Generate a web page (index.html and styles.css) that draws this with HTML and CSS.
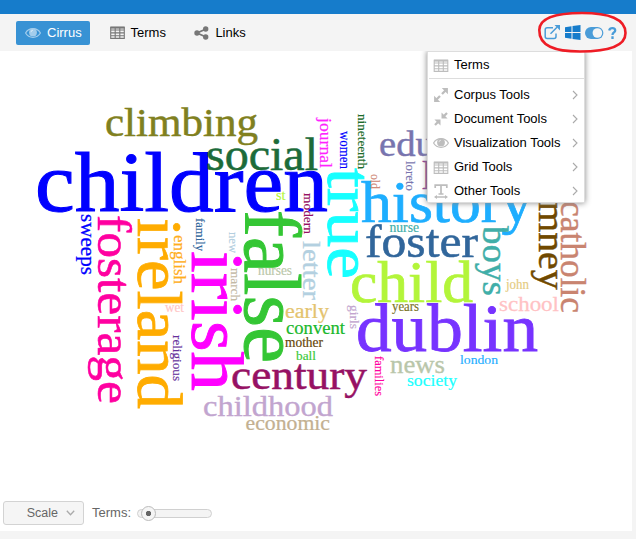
FILE: index.html
```html
<!DOCTYPE html>
<html lang="en">
<head>
<meta charset="utf-8">
<title>Cirrus</title>
<link rel="stylesheet" href="styles.css">
</head>
<body>
<svg class="defs" width="0" height="0">
  <symbol id="eye" viewBox="0 0 16 12"><path d="M.6 6C3.8.2 12.2.2 15.4 6 12.2 11.8 3.800 11.8.6 6Z" fill="none" stroke="currentColor" stroke-width="1.2"/><circle cx="8" cy="5.4" r="3.9" fill="currentColor"/><path d="M6 5.200A2 2 0 0 1 8 3.200" fill="none" stroke="#fff" stroke-width=".8" opacity=".7"/></symbol>
  <symbol id="table" viewBox="0 0 15 13"><path d="M.7 1.200h13.600v11.200H.7zM.7 4h13.600M.7 6.900h13.600M.7 9.700h13.600M5.200 2v10.400M9.800 2v10.400" fill="none" stroke="currentColor" stroke-width="1.100"/><path d="M.5.600h14v2H.5z" fill="currentColor"/></symbol>
  <symbol id="chev" viewBox="0 0 6 10"><path d="M1 1l4 4-4 4" fill="none" stroke="currentColor" stroke-width="1.100"/></symbol>
</svg>
<div class="band"></div>
<header class="bar">
  <nav class="tabs">
    <a class="tab active"><svg width="16" height="12"><use href="#eye"/></svg>Cirrus</a>
    <a class="tab terms"><svg width="15" height="13"><use href="#table"/></svg>Terms</a>
    <a class="tab links"><svg width="15" height="14" viewBox="0 0 15 14"><path d="M12 3L3 7l9 4" fill="none" stroke="currentColor" stroke-width="1.800"/><circle cx="11.700" cy="3" r="2.700" fill="currentColor"/><circle cx="3" cy="7" r="2.700" fill="currentColor"/><circle cx="11.700" cy="11" r="2.700" fill="currentColor"/></svg>Links</a>
  </nav>
  <div class="tools">
    <svg width="17" height="15" viewBox="0 0 17 15"><path d="M9 2.700H3.200Q1.200 2.700 1.200 4.700V11.500Q1.200 13.500 3.200 13.500H10Q12 13.500 12 11.500V8.500M6.500 8.700L13 2.200" fill="none" stroke="currentColor" stroke-width="1.500"/><path d="M10.500 0H16v5.500z" fill="currentColor"/></svg>
    <svg class="win" width="16" height="15" viewBox="0 0 16 15"><path d="M0 2.300L6.500 1.300V7H0zM7.500 1.100L15.500 0V7h-8zM0 8h6.500v5.700L0 12.700zM7.500 8h8v7L7.500 13.900z" fill="currentColor"/></svg>
    <svg width="19" height="12" viewBox="0 0 19 12"><rect x="0" y="0" width="18.400" height="12" rx="6" fill="currentColor"/><circle cx="12.400" cy="6" r="4.800" fill="#f4f4f4"/></svg>
    <svg width="9" height="12" viewBox="0 0 9 12"><path d="M1.200 3.500C2 .3 7.200.6 7.200 3.500 7.200 5.500 4.500 5.400 4.500 7.900M4.500 9.300V12" fill="none" stroke="currentColor" stroke-width="2.300"/></svg>
  </div>
</header>
<main class="panel">
  <svg class="cloud" id="cloud" width="632" height="440" viewBox="0 51 632 440"></svg>
  <footer class="controls">
    <button class="scale">Scale<svg width="9" height="6" viewBox="0 0 9 6"><path d="M.8.8l3.700 4 3.700-4" fill="none" stroke="#aaa" stroke-width="1.300"/></svg></button>
    <span class="label">Terms:</span>
    <div class="track"><div class="thumb"></div></div>
  </footer>
</main>
<div class="menu">
  <div class="item first"><svg width="15" height="13"><use href="#table"/></svg><span>Terms</span></div>
  <div class="item"><svg width="14" height="14" viewBox="0 0 14 14"><path d="M8 6l4-4M6 8l-4 4" stroke="currentColor" stroke-width="2.300"/><path d="M7.800.1h6.100v6.100zM.1 7.800v6.100h6.100z" fill="currentColor"/></svg><span>Corpus Tools</span><svg class="chev" width="6" height="10"><use href="#chev"/></svg></div>
  <div class="item"><svg width="14" height="14" viewBox="0 0 14 14"><path d="M9 5l4-4M5 9l-4 4" stroke="currentColor" stroke-width="2.300"/><path d="M7.500.4v6.100h6.100zM.4 7.500h6.100v6.100z" fill="currentColor"/></svg><span>Document Tools</span><svg class="chev" width="6" height="10"><use href="#chev"/></svg></div>
  <div class="item"><svg width="16" height="12"><use href="#eye"/></svg><span>Visualization Tools</span><svg class="chev" width="6" height="10"><use href="#chev"/></svg></div>
  <div class="item"><svg width="15" height="13"><use href="#table"/></svg><span>Grid Tools</span><svg class="chev" width="6" height="10"><use href="#chev"/></svg></div>
  <div class="item"><svg width="14" height="15" viewBox="0 0 14 15"><path d="M1.200 4V1.200h11.600V4M7 1v9M4.500 10h5M1.500 13h11" fill="none" stroke="currentColor" stroke-width="1.700"/><path d="M0 13l3-2v4zM14 13l-3-2v4z" fill="currentColor"/></svg><span>Other Tools</span><svg class="chev" width="6" height="10"><use href="#chev"/></svg></div>
</div>
<svg class="ring" width="92" height="44" viewBox="0 0 92 44"><path d="M45 2C20 2 2.500 6 2.300 19 2 35 18 40.500 43 40.500 70 40.500 88.500 36 88.500 22 88.500 8 72 2 45 2Z" fill="none" stroke="#ee1c25" stroke-width="2.600"/></svg>
<script src="cloud.js"></script>
</body>
</html>
```
FILE: styles.css
```css
* { box-sizing: border-box; }
body { margin: 0; width: 636px; height: 539px; overflow: hidden; position: relative; background: #f4f4f4; font: 13px/16px "Liberation Sans", Arial, sans-serif; color: #000; }
.defs { position: absolute; }
.band { height: 14px; background: #167ccb; }
.bar { height: 37px; display: flex; justify-content: space-between; align-items: center; padding: 0 19px 0 16px; }
.tabs { display: flex; gap: 10.5px; }
.tab { display: flex; align-items: center; height: 24px; gap: 6px; padding: 0 9px; color: #000; border-radius: 2px; }
.tab svg { color: #777; }
.active { background: #3892d4; color: #fff; width: 74px; }
.active svg { color: #a3cdec; flex: none; }
.tools { display: flex; align-items: center; gap: 4px; color: #4a9cd8; }
.win { color: #167ccb; }
.panel { width: 632px; height: 480px; background: #fff; display: flex; flex-direction: column; }
.cloud { display: block; flex: none; font-family: "Palatino Linotype", Palatino, "Liberation Serif", serif; }
.controls { display: flex; align-items: center; padding: 5px 3px 0; height: 39px; color: #666; }
.scale { width: 81px; height: 24px; display: flex; align-items: center; justify-content: flex-end; gap: 8px; padding: 0 8px; border: 1px solid #d3d3d3; border-radius: 3px; background: #f5f5f5; font: inherit; font-size: 12.5px; color: #666; }
.label { margin-left: 8px; width: 45px; }
.track { width: 75px; height: 9px; border: 1px solid #d0d0d0; border-radius: 5px; background: #f4f4f4; }
.thumb { width: 15px; height: 15px; margin: -4px 0 0 3px; border: 1px solid #bbb; border-radius: 50%; background: radial-gradient(circle, #666 0 2.3px, #f5f5f5 3px); }
.menu { position: absolute; left: 427px; top: 51px; width: 158px; height: 152px; background: #fff; border: 1px solid #ddd; box-shadow: 0 0 6px #888; padding-left: 5px; clip-path: inset(0 -8px -8px -8px); }
.item { height: 24px; display: flex; align-items: center; color: #bdbdbd; }
.item > svg:first-child { width: 16px; }
.item span { color: #000; margin-left: 5px; white-space: nowrap; }
.item .chev { margin: 0 6px 0 auto; color: #aaa; }
.first { height: 27px; border-bottom: 1px solid #ddd; margin-left: -4px; padding-left: 4px; margin-bottom: 4px; }
.ring { position: absolute; left: 537px; top: 11px; }
```
FILE: cloud.js
```js
// [word, x, y, drawn length, font size, colour, vertical]
// For vertical words x is the baseline and y is the start of the word.
const words = [
  ["children",35,210.7,293,84,"#0000ff"],
  ["climbing",105,135.7,153,41,"#808020"],
  ["social",206,170.3,112,47,"#1c6b3a"],
  ["education",379,155.7,150,35,"#7874ae"],
  ["l",422,189,10,41,"#8a3f94"],
  ["history",361,221.7,171,60,"#1eaeff"],
  ["foster",365,256.7,113,47,"#31669b"],
  ["nurse",389.5,232,29.5,14,"#40aea8"],
  ["child",350,301.7,123,60,"#b3f53a"],
  ["dublin",356,350.7,182,67,"#7733ff"],
  ["century",231,388.5,136,42,"#961164"],
  ["childhood",203,415.7,130,30,"#c2a5cf"],
  ["economic",245.5,430,84.5,20,"#c3b091"],
  ["early",285,318.3,44,20,"#e4c36e"],
  ["convent",286,334,59,18,"#19b82c"],
  ["mother",285,346.7,38,14,"#664407"],
  ["ball",296,360,20,13,"#38c934"],
  ["nurses",258,275,34,14,"#bac7a9"],
  ["st",276,200,9.5,14,"#b3f53a"],
  ["wet",165,311.7,19,14,"#ffc5c5"],
  ["years",392,311,27,14,"#7a7428"],
  ["john",506,289,23,14,"#e5cb80"],
  ["school",499,310.7,60,21,"#ffc2c4"],
  ["news",390,372.7,55,25,"#b9c6aa"],
  ["society",407,386,50,17,"#20ffff"],
  ["london",460,364,38,13,"#1eaeff"],
  ["sweeps",80.7,214,61,20,"#0000ff",1],
  ["fosterage",98.2,215,189,48,"#ff00a0",1],
  ["ireland",137.7,218,191,64,"#ffac00",1],
  ["english",174,235,49,17,"#ffae1c",1],
  ["family",195.9,218,33,13,"#31669b",1],
  ["irish",192.3,251,140,73,"#ff00ff",1],
  ["false",245,210,153,80,"#34c634",1],
  ["religious",173.3,335,46,13,"#65309b",1],
  ["new",228.7,232,21,13,"#b4cfe0",1],
  ["march",231.3,268,33,13,"#c3b9a5",1],
  ["letter",303.3,241,59,26,"#b3d0e0",1],
  ["modern",304,193,41,13,"#961164",1],
  ["journal",320,118,50,17,"#ff22ff",1],
  ["women",340.3,131,38,14,"#0000ff",1],
  ["nineteenth",358.3,114,55,13,"#1c6b2a",1],
  ["true",328,168,111,63,"#16ffff",1],
  ["old",371,174,15,13,"#d08a78",1],
  ["loreto",406,161,30,13,"#7874ae",1],
  ["girls",350.3,305,24,13,"#c2a5cf",1],
  ["families",375.3,356,40,13,"#ff00a0",1],
  ["boys",482.5,226,70,35,"#40aea8",1],
  ["chimney",538.5,153,136.5,38,"#704900",1],
  ["catholic",561,201,112,35,"#c98470",1]
];
const svg = document.getElementById("cloud");
for (const [word, x, y, length, size, fill, vertical] of words) {
  const t = document.createElementNS("http://www.w3.org/2000/svg", "text");
  t.textContent = word;
  t.setAttribute("font-size", size);
  t.setAttribute("fill", fill);
  t.setAttribute("stroke", fill);
  t.setAttribute("stroke-width", size * 0.012);
  t.setAttribute("textLength", length);
  t.setAttribute("lengthAdjust", "spacingAndGlyphs");
  t.setAttribute("transform", `translate(${x} ${y})` + (vertical ? " rotate(90)" : ""));
  svg.appendChild(t);
}
```
